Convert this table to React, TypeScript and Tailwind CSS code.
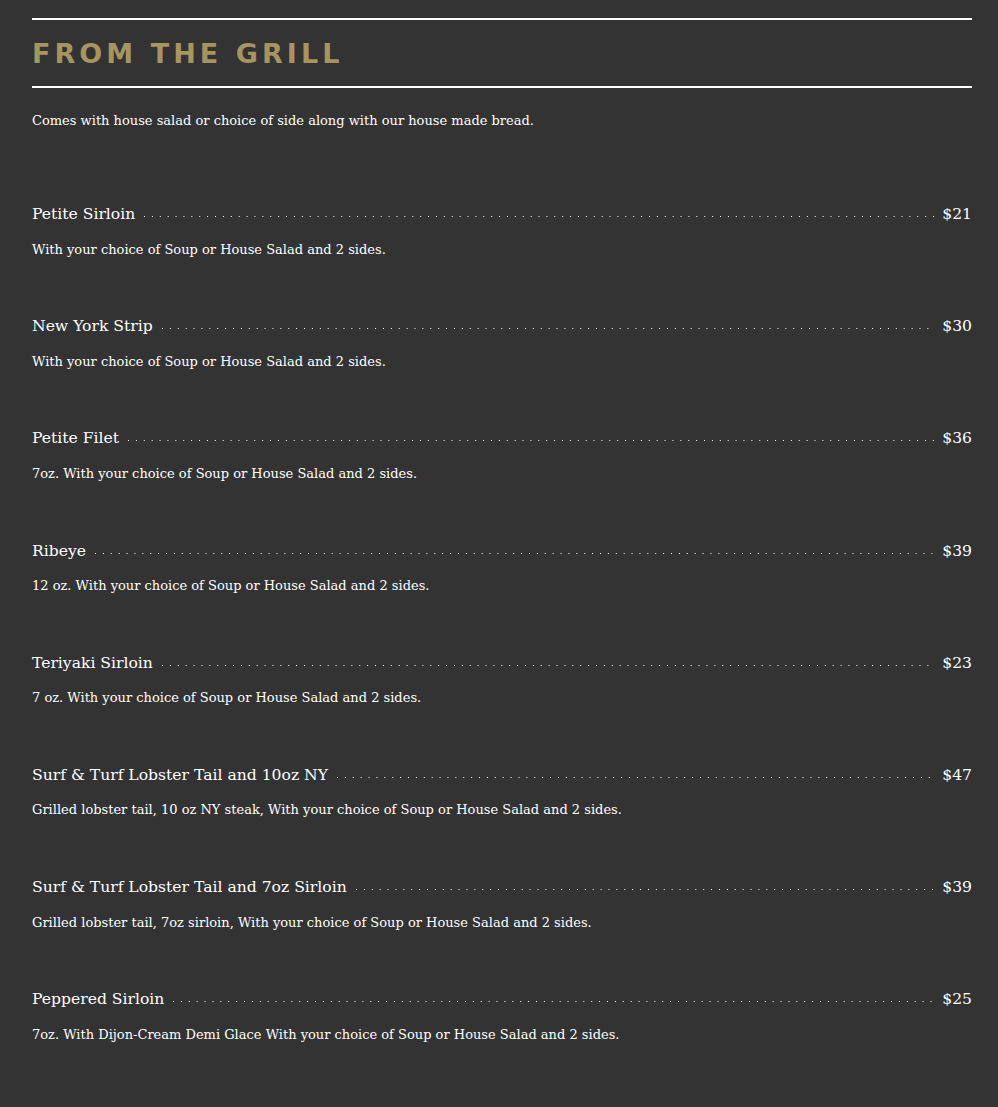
const ITEMS = [
  { name: 'Petite Sirloin', price: '$21', desc: 'With your choice of Soup or House Salad and 2 sides.' },
  { name: 'New York Strip', price: '$30', desc: 'With your choice of Soup or House Salad and 2 sides.' },
  { name: 'Petite Filet', price: '$36', desc: '7oz. With your choice of Soup or House Salad and 2 sides.' },
  { name: 'Ribeye', price: '$39', desc: '12 oz. With your choice of Soup or House Salad and 2 sides.' },
  { name: 'Teriyaki Sirloin', price: '$23', desc: '7 oz. With your choice of Soup or House Salad and 2 sides.' },
  {
    name: 'Surf & Turf Lobster Tail and 10oz NY',
    price: '$47',
    desc: 'Grilled lobster tail, 10 oz NY steak, With your choice of Soup or House Salad and 2 sides.',
  },
  {
    name: 'Surf & Turf Lobster Tail and 7oz Sirloin',
    price: '$39',
    desc: 'Grilled lobster tail, 7oz sirloin, With your choice of Soup or House Salad and 2 sides.',
  },
  {
    name: 'Peppered Sirloin',
    price: '$25',
    desc: '7oz. With Dijon-Cream Demi Glace With your choice of Soup or House Salad and 2 sides.',
  },
]

type MenuItemProps = { name: string; price: string; desc: string }

function MenuItem({ name, price, desc }: MenuItemProps) {
  return (
    <div className="mb-[52.7px]">
      <div className="flex items-end text-[15.6px] leading-[26px] text-white">
        <span>{name}</span>
        <div className="ml-[9px] mr-2 mb-[10px] h-px flex-1 bg-[linear-gradient(to_right,#ffffff_1px,transparent_1px)] bg-[length:7.9px_1px] bg-repeat-x" />
        <span>{price}</span>
      </div>
      <p className="mt-[11.5px] text-[13px] leading-[22px] text-white">{desc}</p>
    </div>
  )
}

export default function App() {
  return (
    <div className="min-h-[1107px] bg-[#333333] pl-8 pr-[26px] pt-[18px] font-['DejaVu_Serif',serif]">
      <div className="h-[2px] bg-white" />
      <h2 className="mt-[17.5px] mb-[16.5px] font-['DejaVu_Sans',sans-serif] text-[27px] font-bold leading-[32px] tracking-[0.15em] text-[#a79461]">
        FROM THE GRILL
      </h2>
      <div className="h-[2px] bg-white" />
      <p className="mt-[21.5px] text-[13px] leading-[22px] text-white">
        Comes with house salad or choice of side along with our house made bread.
      </p>
      <div className="mt-[69.5px]">
        {ITEMS.map((item) => (
          <MenuItem key={item.name} {...item} />
        ))}
      </div>
    </div>
  )
}
